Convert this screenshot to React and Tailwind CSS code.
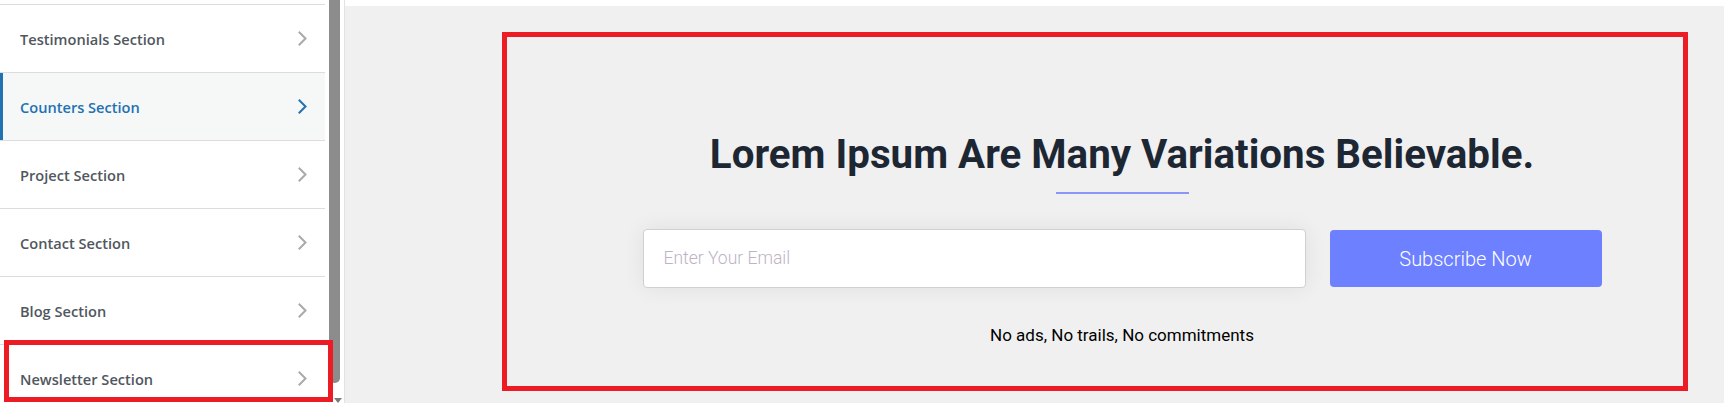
import React from "react";

const rows = [
  { label: "Testimonials Section" },
  { label: "Counters Section", active: true },
  { label: "Project Section" },
  { label: "Contact Section" },
  { label: "Blog Section" },
  { label: "Newsletter Section" },
];

function Chevron({ active }) {
  return (
    <svg width="10" height="15" viewBox="0 0 10 15" fill="none">
      <polyline
        points="1.5,1.5 7.5,7.5 1.5,13.5"
        stroke={active ? "#2271b1" : "#a7aaad"}
        strokeWidth="2"
        strokeLinecap="square"
        fill="none"
      />
    </svg>
  );
}

export default function App() {
  return (
    <div className="relative flex h-[403px] w-[1724px] overflow-hidden bg-white">
      {/* Sidebar */}
      <div className="flex h-full w-[345px] shrink-0 bg-white">
        <div className="w-[325px] shrink-0">
          <div className="h-[4px]" />
          {rows.map((r) => (
            <div
              key={r.label}
              className={
                "flex h-[68px] items-center justify-between border-t border-[#dcdcde] pl-[20px] pr-[17px] " +
                (r.active ? "bg-[#f6f7f7] shadow-[inset_3px_0_0_#2271b1]" : "bg-white")
              }
            >
              <span
                className={
                  "mt-[2px] text-[14.6px] font-semibold " +
                  (r.active ? "text-[#2271b1]" : "text-[#50575e]")
                }
                style={{ fontFamily: '"Open Sans", "Noto Sans", sans-serif' }}
              >
                {r.label}
              </span>
              <Chevron active={r.active} />
            </div>
          ))}
        </div>
        <div className="w-[4px] shrink-0" />
        <div className="relative w-[11px] shrink-0">
          <div className="h-[383px] w-full rounded-b-[5px] bg-[#8c8c8c]" />
          <div className="absolute bottom-[0px] right-[-2px] h-0 w-0 border-x-[4px] border-t-[5px] border-x-transparent border-t-[#7a7a7a]" />
        </div>
        <div className="w-[4px] shrink-0" />
        <div className="w-[1px] shrink-0 bg-[#e2e2e2]" />
      </div>

      {/* Main */}
      <div className="flex-1 pt-[6px]">
        <div className="h-full bg-[#f0f0f0] pl-[157px] pt-[26px]">
          <div className="h-[359px] w-[1186px] border-[5px] border-[#ed1c24]">
            <div
              className="flex flex-col items-center pl-[54px] pt-[94px]"
              style={{ fontFamily: "Roboto, sans-serif" }}
            >
              <h2 className="text-[40.3px] font-bold leading-[48px] text-[#1d2733]">
                Lorem Ipsum Are Many Variations Believable.
              </h2>
              <div className="mt-[13px] h-[2px] w-[133px] bg-[#8a97f6]" />
              <div className="mt-[35px] flex items-center gap-[24px]">
                <div className="flex h-[59px] w-[663px] items-center rounded-[4px] border border-[#d0d0d0] bg-white pl-[20px] shadow-[0_0_22px_rgba(0,0,0,0.07)]">
                  <span className="text-[17.5px] font-light text-[#bdb3c4]">
                    Enter Your Email
                  </span>
                </div>
                <div className="flex h-[57px] w-[272px] items-center justify-center rounded-[4px] bg-[#6d80ff]">
                  <span className="text-[20px] font-light text-white">
                    Subscribe Now
                  </span>
                </div>
              </div>
              <p className="mt-[37px] text-[17px] font-normal leading-[20px] text-black">
                No ads, No trails, No commitments
              </p>
            </div>
          </div>
        </div>
      </div>

      {/* Annotation on sidebar */}
      <div className="pointer-events-none absolute left-[4px] top-[340px] h-[62px] w-[329px] border-[5px] border-[#ed1c24]" />
    </div>
  );
}
